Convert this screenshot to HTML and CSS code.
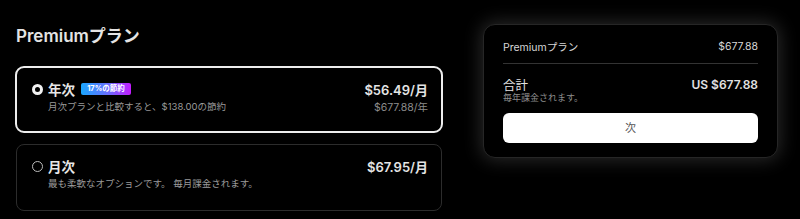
FILE: index.html
```html
<!DOCTYPE html>
<html lang="ja">

<head>
  <meta charset="UTF-8">
  <meta name="viewport" content="width=device-width, initial-scale=1.0">
  <title>Premiumプラン</title>
  <link rel="stylesheet" href="styles.css">
</head>

<body>
  <div class="page">
    <div class="plans">
      <h2 class="title">Premiumプラン</h2>

      <div class="plan selected">
        <div class="planRow">
          <span class="radio on"></span>
          <span class="planName">年次</span>
          <span class="badge">17%の節約</span>
          <span class="price">$56.49/月</span>
        </div>
        <div class="planRow sub">
          <span class="desc">月次プランと比較すると、$138.00の節約</span>
          <span class="subPrice">$677.88/年</span>
        </div>
      </div>

      <div class="plan">
        <div class="planRow">
          <span class="radio"></span>
          <span class="planName">月次</span>
          <span class="price">$67.95/月</span>
        </div>
        <div class="planRow sub">
          <span class="desc">最も柔軟なオプションです。 毎月課金されます。</span>
        </div>
      </div>
    </div>

    <div class="summary">
      <div class="line">
        <span>Premiumプラン</span>
        <span>$677.88</span>
      </div>
      <div class="divider"></div>
      <div class="line total">
        <span>合計</span>
        <span class="totalPrice">US $677.88</span>
      </div>
      <div class="note">毎年課金されます。</div>
      <div class="btn_next">次</div>
    </div>
  </div>
</body>

</html>
```

FILE: styles.css
```css
* {
  margin: 0;
  padding: 0;
  box-sizing: border-box;
}

body {
  background-color: #000;
  color: #e2e2e2;
  font-family: Inter, "Noto Sans CJK JP", sans-serif;
}

.page {
  display: flex;
  align-items: flex-start;
  padding-left: 15px;
}

.plans {
  width: 428px;
}

.title {
  margin-top: 25px;
  margin-bottom: 19px;
  padding-left: 1px;
  font-size: 17px;
  line-height: 22px;
  font-weight: 600;
  color: #e4e4e4;
}

.plan {
  height: 67px;
  margin: 11px 1px 0 1px;
  padding: 12px 13px 0 15px;
  border: 1px solid #2c2c2c;
  border-radius: 8px;
}

.plan.selected {
  margin: 0;
  padding: 12px 13px 0 15px;
  border: 2px solid #ededed;
  border-radius: 9px;
}

.planRow {
  display: flex;
  align-items: center;
  height: 18px;
}

.planRow.sub {
  height: 16px;
  padding-left: 16px;
}

.radio {
  width: 11px;
  height: 11px;
  margin-right: 5px;
  border: 1px solid #bdbdbd;
  border-radius: 50%;
}

.radio.on {
  border: 3.5px solid #f2f2f2;
  background-color: #000;
}

.planName {
  font-size: 13.5px;
  font-weight: 600;
  color: #e6e6e6;
}

.badge {
  margin-left: 6px;
  height: 12px;
  width: 50px;
  line-height: 12px;
  text-align: center;
  font-size: 7.5px;
  font-weight: 700;
  color: #fff;
  border-radius: 2px;
  background: linear-gradient(90deg, #1aa8ff, #6a6cff 55%, #c41cff);
}

.price {
  margin-left: auto;
  font-size: 13px;
  font-weight: 600;
  color: #e4e4e4;
}

.desc {
  font-size: 9.5px;
  color: #9a9a9a;
}

.subPrice {
  margin-left: auto;
  font-size: 10.5px;
  color: #8c8c8c;
}

.summary {
  width: 295px;
  margin-top: 24px;
  margin-left: 40px;
  padding: 14px 19px 14px 19px;
  border: 1px solid #262626;
  border-radius: 12px;
  background-color: #000;
  box-shadow: 0 0 18px 2px rgba(255, 255, 255, 0.16);
}

.line {
  display: flex;
  justify-content: space-between;
  align-items: center;
  height: 14px;
  font-size: 10.5px;
  color: #d6d6d6;
}

.divider {
  height: 1px;
  margin-top: 10px;
  background-color: #333;
}

.line.total {
  height: 16px;
  margin-top: 12px;
  font-size: 12.5px;
  color: #e2e2e2;
}

.totalPrice {
  font-size: 12px;
  font-weight: 600;
}

.note {
  height: 11px;
  line-height: 11px;
  font-size: 9px;
  color: #8e8e8e;
}

.btn_next {
  height: 30px;
  margin-top: 10px;
  line-height: 30px;
  text-align: center;
  font-size: 11px;
  color: #555;
  background-color: #fff;
  border-radius: 6px;
}
```
